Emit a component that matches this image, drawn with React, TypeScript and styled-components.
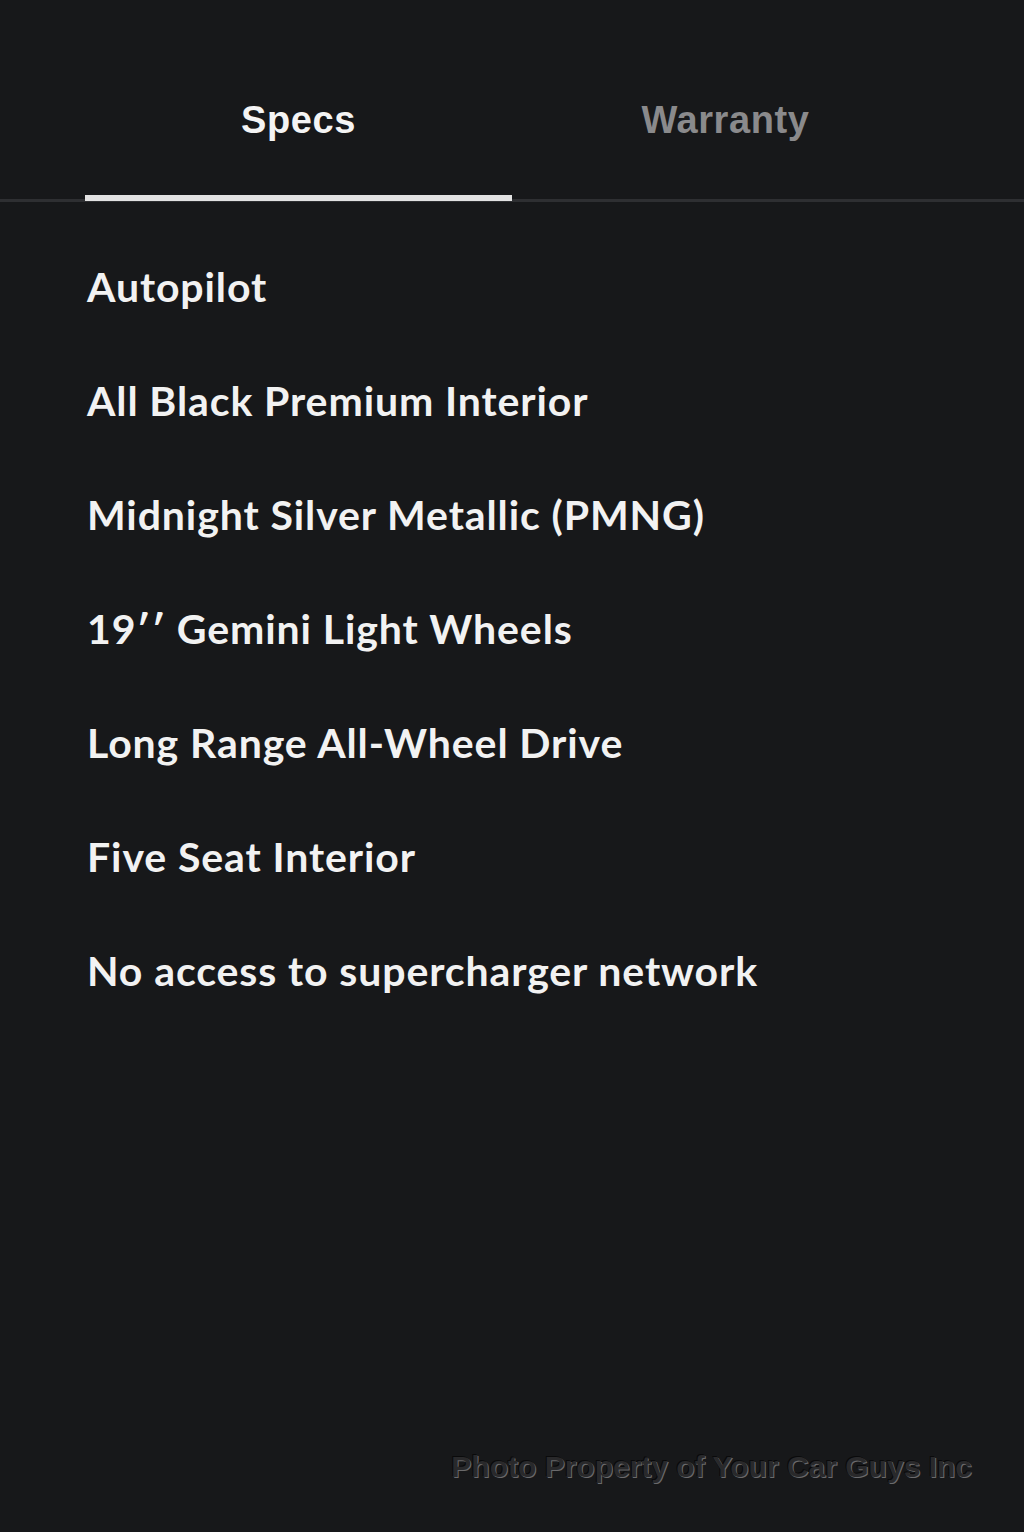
import React, { useState } from "react";
import styled, { createGlobalStyle } from "styled-components";

const GlobalStyle = createGlobalStyle`
  html, body {
    margin: 0;
    padding: 0;
    background-color: #17181a;
  }
`;

const Page = styled.div`
  position: relative;
  width: 1024px;
  height: 1532px;
  background-color: #17181a;
  font-family: Lato, "Noto Sans", sans-serif;
  overflow: hidden;
`;

const TabBar = styled.div`
  display: flex;
  padding: 96px 85px 0;
  border-bottom: 3px solid #2e2f32;
`;

const Tab = styled.button<{ $active: boolean }>`
  flex: 0 0 427px;
  background: none;
  border: none;
  padding: 0 0 51px;
  margin-bottom: -2px;
  font-family: "Liberation Sans", Arial, sans-serif;
  font-weight: 700;
  font-size: 38px;
  line-height: 48px;
  letter-spacing: 0.6px;
  color: ${(p) => (p.$active ? "#f4f4f4" : "#8a8a8c")};
  border-bottom: 6px solid ${(p) => (p.$active ? "#e2e2e2" : "transparent")};
  cursor: pointer;
`;

const List = styled.ul`
  list-style: none;
  margin: 0;
  padding: 27px 87px 0;
  display: flex;
  flex-direction: column;
`;

const Item = styled.li`
  height: 114px;
  display: flex;
  align-items: center;
  font-size: 41px;
  font-weight: 700;
  color: #f2f2f2;
  letter-spacing: 0.9px;
`;

const Watermark = styled.div`
  position: absolute;
  right: 52px;
  bottom: 48px;
  font-family: "Liberation Sans", Arial, sans-serif;
  font-weight: 700;
  font-size: 30px;
  color: #29292b;
  text-shadow: 1px 1px 0 #6a6a6c, -1px -1px 0 #0a0a0b;
`;

const specs = [
  "Autopilot",
  "All Black Premium Interior",
  "Midnight Silver Metallic (PMNG)",
  "19\u2032\u2032 Gemini Light Wheels",
  "Long Range All-Wheel Drive",
  "Five Seat Interior",
  "No access to supercharger network",
];

const App = () => {
  const [tab, setTab] = useState("specs");
  return (
    <Page>
      <GlobalStyle />
      <TabBar>
        <Tab $active={tab === "specs"} onClick={() => setTab("specs")}>
          Specs
        </Tab>
        <Tab $active={tab === "warranty"} onClick={() => setTab("warranty")}>
          Warranty
        </Tab>
      </TabBar>
      <List>
        {specs.map((s) => (
          <Item key={s}>{s}</Item>
        ))}
      </List>
      <Watermark>Photo Property of Your Car Guys Inc</Watermark>
    </Page>
  );
};

export default App;
